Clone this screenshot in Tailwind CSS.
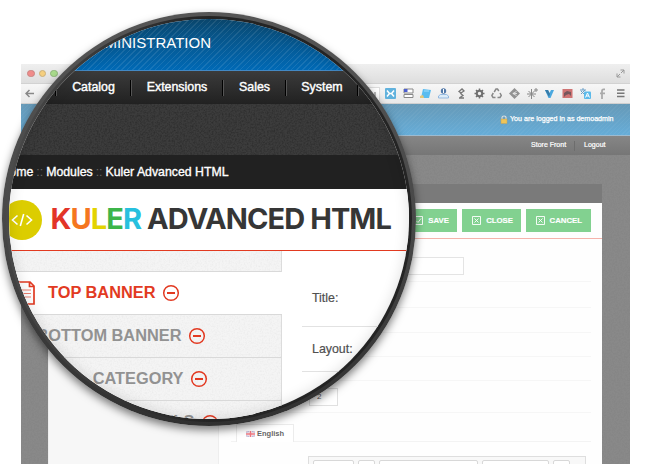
<!DOCTYPE html>
<html lang="en">
<head>
<meta charset="utf-8">
<title>Kuler Advanced HTML</title>
<script src="https://cdn.jsdelivr.net/npm/@tailwindcss/browser@4"></script>
</head>
<body class="bg-white">
<div class="relative w-[650px] h-[464px] overflow-hidden bg-white pt-[64px] pl-[21px] font-['Liberation_Sans',sans-serif]">
  <svg class="absolute w-0 h-0"><defs>
    <filter id="noise" x="0" y="0" width="100%" height="100%"><feTurbulence type="fractalNoise" baseFrequency="0.6" numOctaves="2" seed="4"/><feColorMatrix values="0 0 0 0 0  0 0 0 0 0  0 0 0 0 0  1.3 0 0 0 -0.5"/></filter>
    <g id="minus"><circle cx="9" cy="9" r="7.3" fill="none" stroke="#e23a22" stroke-width="1.5"/><path d="M5 9H13" stroke="#e23a22" stroke-width="2"/></g>
  </defs></svg>

  <!-- Browser window -->
  <div class="w-[609px] h-[400px] flex flex-col">
    <div class="h-5 shrink-0 flex items-center justify-between bg-linear-to-b from-[#efefef] to-[#dedede] border-b border-[#d2d2d2] pl-[6px] pr-[5px]">
      <div class="flex gap-[4px]">
        <i class="size-[7.5px] rounded-full bg-[#f08c8a] border border-[#c98482]"></i>
        <i class="size-[7.5px] rounded-full bg-[#f5cf7f] border border-[#cbb07b]"></i>
        <i class="size-[7.5px] rounded-full bg-[#a9db8c] border border-[#8eb47b]"></i>
      </div>
      <svg class="size-[9px]" viewBox="0 0 9 9" fill="none" stroke="#999" stroke-width="1"><path d="M4.500 1H8V4.500M8 1L5 4M1 4.500V8H4.500M1 8L4 5"/></svg>
    </div>
    <div class="h-5 shrink-0 flex items-center justify-between bg-linear-to-b from-[#f7f7f7] to-[#e9e9e9] border-b border-[#cfcfcf] pl-[4px] pr-[4px]">
      <svg class="w-[9px] h-[9px]" viewBox="0 0 9 9" fill="none" stroke="#888" stroke-width="1.500"><path d="M9 4.500H1M4.500 1L1 4.500L4.500 8"/></svg>
      <div class="flex items-center">
        <div class="w-[30px] h-[14px] bg-white border border-[#ddd] mr-[5px] flex items-center justify-end pr-[3px]"><i class="w-[2px] h-1 bg-[#bbb]"></i></div>
        <div class="flex items-center gap-[6.700px]">
        <svg class="size-[11px]" viewBox="0 0 11 11"><rect width="11" height="11" rx="1" fill="#61b2dd"/><path d="M2 2.500L4.500 5.500L2 8.500M9 2.500L6.500 5.500L9 8.500M4 5.500H7" fill="none" stroke="#fff" stroke-width="1.500"/></svg>
        <svg class="size-[11px]" viewBox="0 0 11 11"><path d="M1 1H10V5H1ZM1 6.500H10V9.500H1Z" fill="#fff" stroke="#888"/><path d="M1 1H4.500V4H1Z" fill="#4c5fd0"/></svg>
        <svg class="size-[11px]" viewBox="0 0 11 11"><path d="M3 1L11 2L9 10H1Z" fill="#5bbcf0"/><path d="M0 8L3 7L4 10H0Z" fill="#e5c77b"/><path d="M4 3L9 3" stroke="#a5defa"/></svg>
        <svg class="size-[11px]" viewBox="0 0 11 11"><circle cx="5.500" cy="3" r="2.700" fill="#5178a8"/><path d="M5.500 1V5" stroke="#fff"/><path d="M2.500 6.500H8.500L10.500 8V10H.5V8Z" fill="#dcecf8" stroke="#83addb" stroke-width=".8"/></svg>
        <svg class="size-[11px]" viewBox="0 0 11 11" fill="none" stroke="#777" stroke-width="1.300"><path d="M3 3.500L6 1L8 3L5 5ZM4 5L7 7.500L4 9.500M3 10H8"/></svg>
        <svg class="size-[11px]" viewBox="0 0 11 11" fill="none" stroke="#707070"><circle cx="5.500" cy="5.500" r="2.700" stroke-width="2"/><path d="M5.500 .5V2.500M5.500 8.500V10.500M.5 5.500H2.500M8.500 5.500H10.500M2 2L3.500 3.500M7.500 7.500L9 9M9 2L7.500 3.500M3.500 7.500L2 9" stroke-width="1.500"/></svg>
        <svg class="size-[11px]" viewBox="0 0 11 11" fill="none" stroke="#888" stroke-width="1.500"><path d="M3.200 4L5 1H6.500L7.800 3M9 5L10.300 7.500L9 9.500H6.500M4.500 9.500H2L.8 7.500L2.300 5"/></svg>
        <svg class="size-[11px]" viewBox="0 0 11 11"><path d="M5.500 0L11 5.500L5.500 11L0 5.500Z" fill="#929292"/><path d="M7.500 3.500L3.800 5.500L7.500 7.500M4 5.500H8" stroke="#eee" stroke-width=".8" fill="none"/></svg>
        <svg class="size-[11px]" viewBox="0 0 11 11" stroke="#888" fill="none"><path d="M4.500 1V11M0 6H9M1.500 3L7.500 9M7.500 3L1.500 9M9 0V4M7 2H11"/></svg>
        <svg class="size-[11px]" viewBox="0 0 11 11"><path d="M1 2H4L5.500 5L7 2H10L6.500 10H4.500Z" fill="#4aa8df"/><path d="M1 2H4L6 6L5 9Z" fill="#387ca9"/></svg>
        <svg class="size-[11px]" viewBox="0 0 11 11"><rect x=".5" y="1" width="10" height="9" fill="#cf7373"/><path d="M2 5L5 3L9 4V8L7 6L4 7L2 9Z" fill="#76565b"/></svg>
        <svg class="size-[11px]" viewBox="0 0 11 11"><path d="M0 2H6M3 0V2M1 6L5 2M1 3L4 6" stroke="#6a9fc7" fill="none"/><rect x="4" y="3.500" width="7" height="7.500" rx="1" fill="#5cbaea"/><path d="M5.500 9.500L7.500 5L9.500 9.500M6.200 8H8.800" stroke="#fff" fill="none"/></svg>
        <svg class="size-[11px]" viewBox="0 0 11 11" fill="none" stroke="#aaa" stroke-width="1.800"><path d="M8 1.300H6.500Q5 1.300 5 3V11M3 5.300H8"/></svg>
        <svg class="size-[11px]" viewBox="0 0 11 11" stroke="#777" stroke-width="1.500"><path d="M2 2H9.500M2 5.200H9.500M2 8.400H9.500"/></svg>
        </div>
      </div>
    </div>
    <div class="h-8 shrink-0 flex items-center justify-end gap-[2px] pr-[16.500px] bg-[repeating-linear-gradient(135deg,transparent_0_2px,rgba(255,255,255,.04)_2px_3px),linear-gradient(#6699b7,#66add8)] border-b border-[#9dbbd0] text-white text-[7.100px] [-webkit-text-stroke:.25px_white]">
      <svg class="w-[8px] h-[9px]" viewBox="0 0 8 9"><path d="M2 4V2.500Q2 1 4 1T6 2.500V4" fill="none" stroke="#dedede" stroke-width="1.200"/><rect x="1" y="4" width="6" height="4.500" fill="#efc558" stroke="#c5a154" stroke-width=".5"/></svg>
      <span>You are logged in as demoadmin</span>
    </div>
    <div class="h-[19px] shrink-0 flex items-center justify-end pr-[24.500px] bg-linear-to-b from-[#868686] to-[#767676] text-white text-[7px] [-webkit-text-stroke:.2px_white]">
      <span>Store Front</span><i class="w-px h-[10px] bg-[#6d6d6d] ml-[8px] mr-[9px]"></i><span>Logout</span>
    </div>
    <div class="relative flex-1 bg-[#898989] pt-[29px] pl-[27px] pr-[28px]">
      <svg class="absolute inset-0 w-full h-full opacity-[.05]"><rect width="100%" height="100%" filter="url(#noise)"/></svg>
      <div class="relative h-[280px] flex flex-col bg-[#fefefe]">
        <div class="h-[19px] shrink-0 bg-[#7a7a7a]"></div>
        <div class="h-[36px] shrink-0 flex items-center justify-end gap-[5px] pr-[11px] border-b border-[#f5b3ab] text-white text-[7.800px] font-bold [-webkit-text-stroke:.15px_white]">
          <div class="h-[23px] w-[58px] bg-[#82d190] flex items-center justify-end gap-[5px] pr-[8px]"><svg class="size-[9px]" viewBox="0 0 9 9" fill="none" stroke="#fff" stroke-width=".9"><path d="M.5 .5H8.500V8.500H.5ZM2.500 5L4 6.500L7 2.500"/></svg>SAVE</div>
          <div class="h-[23px] w-[59px] bg-[#82d190] flex items-center justify-end gap-[5px] pr-[8px]"><svg class="size-[9px]" viewBox="0 0 9 9" fill="none" stroke="#fff" stroke-width=".9"><path d="M.5 .5H8.500V8.500H.5ZM2.500 2.500L6.500 6.500M6.500 2.500L2.500 6.500"/></svg>CLOSE</div>
          <div class="h-[23px] w-[65px] bg-[#82d190] flex items-center justify-end gap-[5px] pr-[9px]"><svg class="size-[9px]" viewBox="0 0 9 9" fill="none" stroke="#fff" stroke-width=".9"><path d="M.5 .5H8.500V8.500H.5ZM2.500 2.500L6.500 6.500M6.500 2.500L2.500 6.500"/></svg>CANCEL</div>
        </div>
        <div class="flex-1 flex">
          <div class="w-[171px] bg-[#f7f7f7] border-l border-r border-[#eee]"></div>
          <div class="flex-1 pl-[12px] pr-[11px] flex flex-col">
            <div class="h-[43px] shrink-0 border-b border-[#f6f6f6] pt-[18px] pl-[78px]"><div class="w-[155px] h-[18px] bg-white border border-[#e4e4e4]"></div></div>
            <div class="h-[26px] shrink-0 border-b border-[#f6f6f6]"></div>
            <div class="h-[25px] shrink-0 border-b border-[#f6f6f6]"></div>
            <div class="h-6 shrink-0 border-b border-[#f6f6f6]"></div>
            <div class="h-6 shrink-0 border-b border-[#f6f6f6]"></div>
            <div class="h-8 shrink-0 border-b border-[#f6f6f6] pt-[7px] pl-[78px]"><div class="w-[29px] h-[18px] border border-[#e0e0e0] bg-white text-[8px] text-[#555] pl-[7px] leading-[16px]">2</div></div>
            <div class="h-[29px] shrink-0 border-b border-[#f3f3f3] flex items-end pl-[5px]">
              <div class="w-[58px] h-[18px] -mb-px bg-white border border-b-0 border-[#ececec] flex items-center gap-[2px] pl-[9px] text-[7.500px] font-bold text-[#666]">
                <svg class="w-[9px] h-[6px]" viewBox="0 0 9 6"><rect width="9" height="6" fill="#b5bde0"/><path d="M0 0L9 6M9 0L0 6" stroke="#f4d3d8"/><path d="M4.500 0V6M0 3H9" stroke="#fff" stroke-width="2.500"/><path d="M4.500 0V6M0 3H9" stroke="#f07780" stroke-width="1.500"/></svg>English</div>
            </div>
            <div class="mt-[14px] ml-[77px] mr-[5px] h-[8px] shrink-0 bg-[#f8f8f8] border border-b-0 border-[#dedede] pl-[4px] pt-[3px] flex gap-[4px] overflow-hidden">
              <i class="w-[41px] h-3 shrink-0 bg-white border border-[#d8d8d8] rounded-xs"></i><i class="w-[17px] h-3 shrink-0 bg-white border border-[#d8d8d8] rounded-xs"></i><i class="w-[99px] h-3 shrink-0 bg-white border border-[#d8d8d8] rounded-xs"></i><i class="w-[67px] h-3 shrink-0 bg-white border border-[#d8d8d8] rounded-xs"></i><i class="w-[17px] h-3 shrink-0 bg-white border border-[#d8d8d8] rounded-xs"></i>
            </div>
          </div>
        </div>
      </div>
    </div>
  </div>

  <!-- Magnifier lens over the window -->
  <div class="absolute left-[2px] top-[12px] size-[414px] rounded-full p-[4px] bg-linear-to-b from-[#555] via-[#484848] to-[#303030] shadow-[0_4px_9px_rgba(0,0,0,.5)]">
    <div class="size-[406px] rounded-full p-[3px] bg-linear-to-r from-[#4a4a4a] via-[#242424] to-[#242424]">
      <div class="relative size-[400px] rounded-full overflow-hidden bg-white flex flex-col">
        <div class="h-[52px] shrink-0 flex justify-end pr-[198px] pt-[15px] bg-[repeating-linear-gradient(135deg,transparent_0_3px,rgba(255,255,255,.09)_3px_4px),linear-gradient(#0b4a72,#0069b5)] border-b border-[#4389c4] text-white text-[15px] leading-[18px] whitespace-nowrap"><span>ADMINISTRATION</span></div>
        <div class="h-[33px] shrink-0 flex items-center bg-linear-to-b from-[#3b3b3b] to-[#212121] text-white text-[12.400px] [-webkit-text-stroke:.4px_white] pl-[46px] *:shrink-0">
          <i class="w-[2px] h-4 bg-black border-r border-[#555]"></i><span class="w-[73px] text-center">Catalog</span>
          <i class="w-[2px] h-4 bg-black border-r border-[#555]"></i><span class="w-[90px] text-center">Extensions</span>
          <i class="w-[2px] h-4 bg-black border-r border-[#555]"></i><span class="w-[61px] text-center">Sales</span>
          <i class="w-[2px] h-4 bg-black border-r border-[#555]"></i><span class="w-[70px] text-center">System</span>
          <i class="w-[2px] h-4 bg-black border-r border-[#555]"></i>
        </div>
        <div class="h-[51px] shrink-0 bg-[#3c3c3c]"><svg class="w-full h-full opacity-40"><rect width="100%" height="100%" filter="url(#noise)"/></svg></div>
        <div class="h-[34px] shrink-0 flex items-center bg-[#212121] text-white text-[12.300px] [-webkit-text-stroke:.35px_white] whitespace-nowrap pl-[219.500px]"><div class="w-0 flex justify-end gap-[3px]"><span>Home</span><span class="text-[#666] [-webkit-text-stroke:0]">::</span><span>Modules</span><span class="text-[#666] [-webkit-text-stroke:0]">::</span><span>Kuler Advanced HTML</span></div></div>
        <div class="h-[62px] shrink-0 flex items-center bg-white border-b border-[#e23a20]">
          <div class="size-[40px] -ml-[7px] rounded-full bg-[#dccd00] shrink-0 flex items-center justify-center"><svg class="w-[22px] h-[14px]" viewBox="0 0 22 14" fill="none" stroke="#fff" stroke-width="1.600"><path d="M6.500 2.500L1.500 7L6.500 11.500M15.500 2.500L20.500 7L15.500 11.500M12.700 1L9.300 13"/></svg></div>
          <h1 class="ml-[8.500px] -mt-[2px] font-['Inter',sans-serif] font-bold text-[29px] leading-none tracking-[-0.920px] text-[#363636] whitespace-nowrap"><span class="text-[#e23428]">K</span><span class="text-[#f5761f]">U</span><span class="text-[#e3d300]">L</span><span class="text-[#3cb54a]">E</span><span class="text-[#27c0de]">R</span> ADVANCED HTML</h1>
        </div>
        <div class="flex-1 flex">
          <div class="relative w-[273px] shrink-0 bg-[#f4f4f4] border-r border-[#dcdcdc] text-[16.350px] font-bold text-[#929292]">
            <svg class="absolute inset-0 w-full h-full opacity-[.05]"><rect width="100%" height="100%" filter="url(#noise)"/></svg>
            <div class="relative flex flex-col whitespace-nowrap">
              <div class="h-[21px] border-b border-[#d9d9d9]"></div>
              <div class="w-[273px] h-[43px] bg-white border-b border-[#d9d9d9] flex items-center text-[#e23a22] pl-[8px]">
                <svg class="w-[18px] h-[24px]" viewBox="0 0 18 24" fill="none" stroke="#e23a22" stroke-width="1.700"><path d="M1 1H13L17 5V23H1ZM12.500 1V5.500H17"/><path d="M4 9H14M4 12.500H14M4 16H14" stroke-width="1" opacity=".65"/></svg>
                <span class="ml-[13px] -mt-[2px]">TOP BANNER</span><svg class="size-[18px] ml-[6.500px]"><use href="#minus"/></svg></div>
              <div class="h-[43px] border-b border-[#d9d9d9] flex items-center justify-end pr-[75px]"><span class="-mt-[2px]">BOTTOM BANNER</span><svg class="size-[18px] ml-[6.500px]"><use href="#minus"/></svg></div>
              <div class="h-[43px] border-b border-[#d9d9d9] flex items-center justify-end pr-[73px]"><span class="-mt-[2px]">CATEGORY</span><svg class="size-[18px] ml-[6.500px]"><use href="#minus"/></svg></div>
              <div class="h-[43px] flex items-center justify-end pr-[62px]"><span class="-mt-[2px]">LABELS</span><svg class="size-[18px] ml-[6.500px]"><use href="#minus"/></svg></div>
            </div>
          </div>
          <div class="flex-1 pl-[20px] pt-[20px] text-[12.400px] text-[#505050] [-webkit-text-stroke:.2px_#505050]">
            <div class="h-[56px] border-b border-[#e2e2e2] flex items-center pl-[10px]">Title:</div>
            <div class="h-[45px] border-b border-[#e2e2e2] flex items-center pl-[10px]">Layout:</div>
          </div>
        </div>
        <div class="absolute inset-0 rounded-full shadow-[inset_0_0_14px_rgba(0,0,0,.13)]"></div>
      </div>
    </div>
  </div>
</div>
</body>
</html>
